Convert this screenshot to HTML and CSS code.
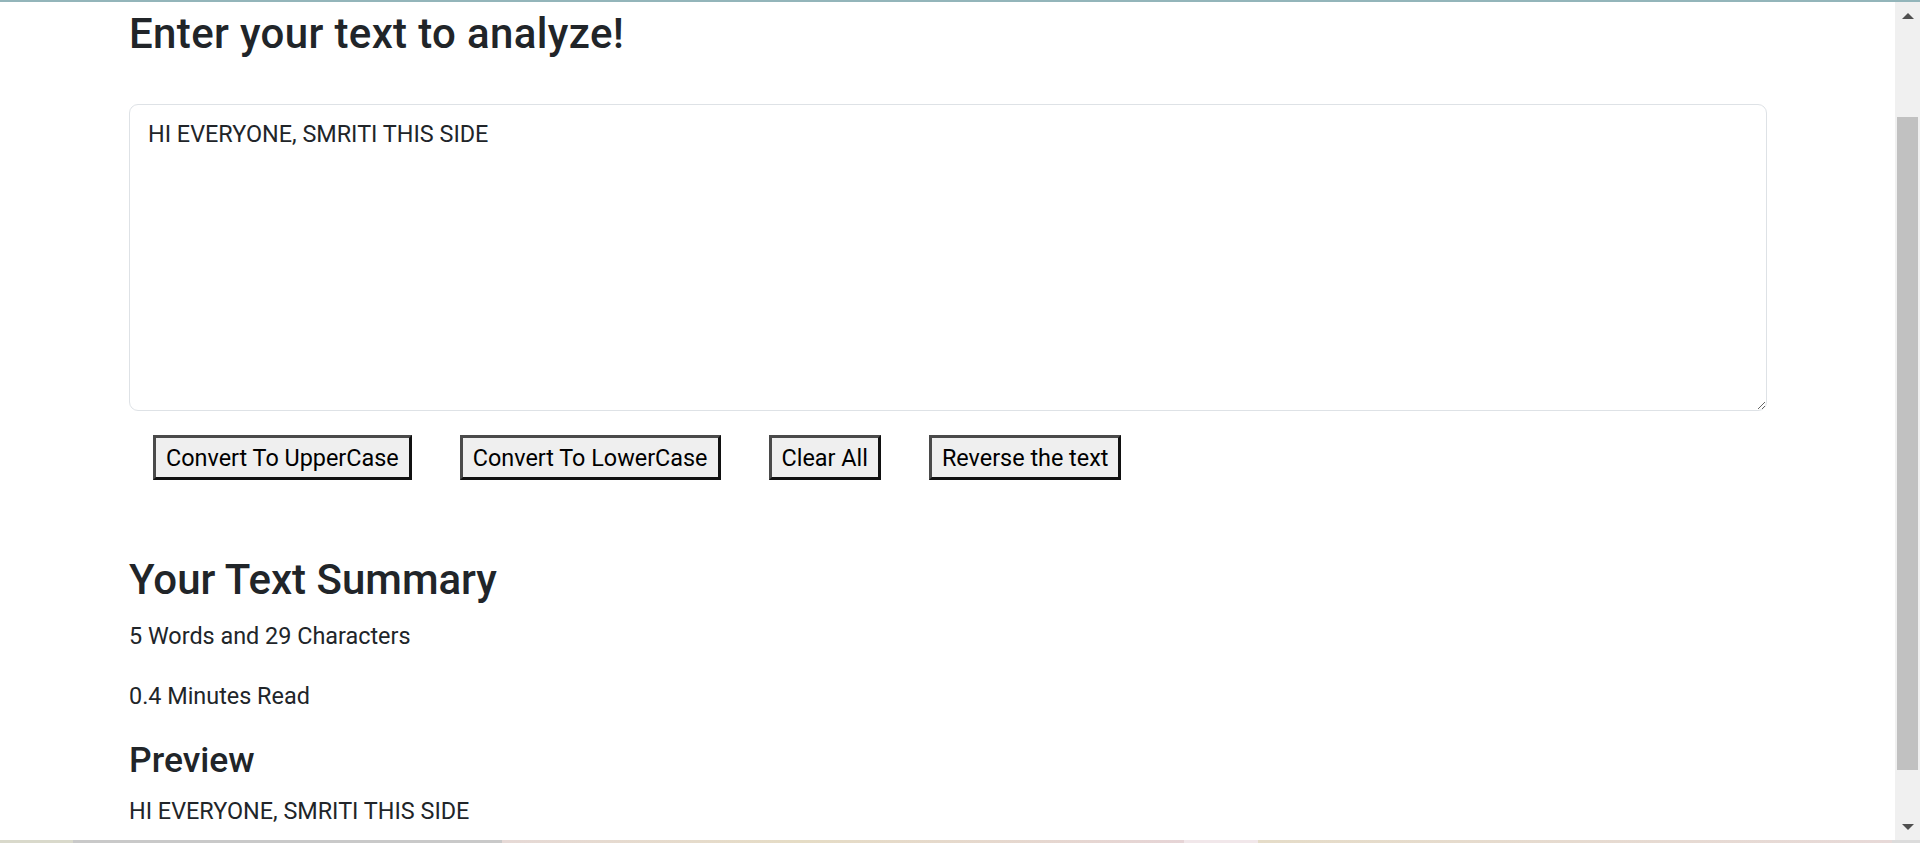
FILE: index.html
```html
<!DOCTYPE html>
<html lang="en">
<head>
<meta charset="utf-8">
<title>TextUtils</title>
<link rel="stylesheet" href="styles.css">
</head>
<body>
<div class="frame-top"></div>
<div class="viewport">
  <main class="page">
    <div class="container">
      <h1 class="title title-main">Enter your text to analyze!</h1>
      <textarea class="text-box" id="myBox" rows="8">HI EVERYONE, SMRITI THIS SIDE</textarea>
      <div class="actions">
        <button class="btn">Convert To UpperCase</button>
        <button class="btn">Convert To LowerCase</button>
        <button class="btn">Clear All</button>
        <button class="btn">Reverse the text</button>
      </div>
      <section class="summary">
        <h2 class="title summary-title">Your Text Summary</h2>
        <p class="line">5 Words and 29 Characters</p>
        <p class="line line-gap">0.4 Minutes Read</p>
        <h3 class="sub-title">Preview</h3>
        <p class="line">HI EVERYONE, SMRITI THIS SIDE</p>
      </section>
    </div>
  </main>
  <div class="scrollbar">
    <div class="arrow arrow-up"></div>
    <div class="track"><div class="thumb"></div></div>
    <div class="arrow arrow-down"></div>
  </div>
</div>
<div class="frame-bottom"></div>
</body>
</html>
```
FILE: styles.css
```css
* { box-sizing: border-box; }
html, body { margin: 0; padding: 0; height: 100%; overflow: hidden; }
body {
  font-family: Roboto, "Liberation Sans", sans-serif;
  color: #212529;
  background: #fff;
  display: flex;
  flex-direction: column;
}
.frame-top { height: 2px; background: #93b5ba; flex: none; }
.viewport { flex: 1; display: flex; min-height: 0; }
.page { flex: 1; overflow: hidden; }
.container { margin-left: 129px; width: 1638px; padding-top: 7px; }

.title {
  margin: 0;
  font-size: 42px;
  font-weight: 500;
  line-height: 50px;
}
.title-main { letter-spacing: 0.35px; }
.text-box {
  display: block;
  margin-top: 45px;
  width: 1638px;
  height: 307px;
  padding: 11px 18px 9px;
  border: 1px solid #dee2e6;
  border-radius: 9px;
  font-family: Roboto, "Liberation Sans", sans-serif;
  font-size: 23.4px;
  line-height: 36px;
  color: #212529;
  background: #fff;
  outline: none;
}
.actions { display: flex; margin-top: 24px; }
.btn {
  margin: 0 24px;
  padding: 1.5px 10px;
  font-family: Roboto, "Liberation Sans", sans-serif;
  font-size: 23.4px;
  line-height: 36px;
  color: #000;
  background: #efefef;
  border: 3px solid;
  border-color: #4a4a4a #111 #111 #4a4a4a;
  border-radius: 0;
}
.summary { padding-top: 75px; }
.summary-title { margin-bottom: 13px; }
.line {
  margin: 0;
  font-size: 23.4px;
  line-height: 36px;
}
.line-gap { margin-top: 24px; }
.sub-title {
  margin: 25px 0 12px;
  font-size: 35.5px;
  font-weight: 500;
  line-height: 42px;
}

.scrollbar {
  flex: none;
  width: 25px;
  background: #f0f0f0;
  display: flex;
  flex-direction: column;
  align-items: center;
}
.arrow { width: 0; height: 0; border-left: 6px solid transparent; border-right: 6px solid transparent; flex: none; }
.arrow-up { margin-top: 11px; border-bottom: 6px solid #505050; }
.arrow-down { margin-bottom: 10px; border-top: 6px solid #505050; }
.track { flex: 1; width: 100%; position: relative; }
.thumb { position: absolute; left: 2px; right: 2px; top: 98px; height: 653px; background: #c1c1c1; }
.frame-bottom {
  flex: none;
  height: 3px;
  background: linear-gradient(90deg, #d9d9cb 0 73px, #c9c9c9 73px 502px, #e6d9d6 502px, #e5dcc5 800px, #e6d4d6 1184px, #f1e7ea 1184px 1258px, #e5dcc8 1258px, #e7d9d8 1892px, #dcdcdc 1892px);
}
```
